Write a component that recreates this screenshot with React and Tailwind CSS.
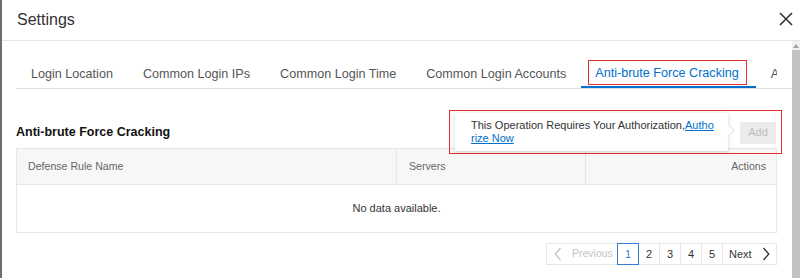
import React from 'react';

const tabs = ['Login Location', 'Common Login IPs', 'Common Login Time', 'Common Login Accounts', 'Anti-brute Force Cracking', 'Account Security'];

const Chevron = ({ dir }) => (
  <svg width="8" height="14" viewBox="0 0 8 14" fill="none" stroke="currentColor" strokeWidth="1.3">
    {dir === 'left' ? <path d="M6.5 1 L1.2 7 L6.5 13" /> : <path d="M1.5 1 L6.8 7 L1.5 13" />}
  </svg>
);

const App = () => {
  const active = 4;

  return (
    <div className="relative flex w-[800px] h-[278px] overflow-hidden bg-white text-[#333]" style={{ fontFamily: '"Liberation Sans", Arial, sans-serif' }}>
      {/* backdrop edge */}
      <div className="w-[2px] shrink-0 bg-[#6e6e6e]" />

      <div className="flex flex-1 flex-col min-w-0">
        {/* header */}
        <div className="flex h-[41px] shrink-0 items-center justify-between border-b border-[#e6e6e6] pl-[15px] pr-[7px]">
          <span className="text-[16px] text-[#333]">Settings</span>
          <svg width="14" height="14" viewBox="0 0 14 14" stroke="#333" strokeWidth="1.6" className="mt-[-2px]">
            <path d="M1 1 L13 13 M13 1 L1 13" />
          </svg>
        </div>

        <div className="flex flex-1 min-h-0">
          <div className="flex-1 min-w-0 pl-[14px]">
            {/* tabs */}
            <div className="mt-[19px] border-b border-[#e0e0e0]">
              <div className="flex w-[761px] overflow-hidden">
                {tabs.map((t, i) => (
                  <div
                    key={t}
                    className={
                      i === active
                        ? 'shrink-0 whitespace-nowrap border-b-2 border-[#0070cc] pl-[7px] pr-[9px] pb-[1px] text-[12.6px] text-[#0070cc]'
                        : 'shrink-0 whitespace-nowrap border-b-2 border-transparent px-[15px] pt-[7px] pb-[4px] text-[12.6px] leading-[15px] text-[#555]'
                    }
                  >
                    {i === active ? (
                      <span className="block border border-[#e52d2d] pl-[6px] pr-[7px] pt-[5px] pb-[3px] leading-[15px]">{t}</span>
                    ) : (
                      t
                    )}
                  </div>
                ))}
              </div>
            </div>

            {/* heading row */}
            <div className="mt-[28px] flex h-[31px] w-[761px] items-center justify-between pr-[1px]">
              <span className="text-[12.5px] font-bold text-[#111]">Anti-brute Force Cracking</span>
              <button className="h-[22px] w-[36px] bg-[#ebebeb] text-[11px] text-[#bdbdbd]">Add</button>
            </div>

            {/* table */}
            <div className="w-[761px] border border-[#e6e6e6]">
              <div className="flex h-[36px] items-center border-b border-[#e6e6e6] bg-[#f7f7f7] text-[10.6px] text-[#666]">
                <div className="flex h-full w-[380px] items-center border-r border-[#e6e6e6] pl-[11px]">Defense Rule Name</div>
                <div className="flex h-full w-[189px] items-center border-r border-[#e6e6e6] pl-[12px]">Servers</div>
                <div className="flex h-full flex-1 items-center justify-end pr-[10px]">Actions</div>
              </div>
              <div className="flex h-[47px] items-center justify-center text-[11px] text-[#333]">No data available.</div>
            </div>

            {/* pagination */}
            <div className="mt-[10px] flex w-[761px] justify-end">
              <div className="flex h-[22px] border border-[#e6e6e6] text-[11px]">
                <div className="flex w-[70px] items-center gap-[10px] pl-[7px] text-[#c4c4c4]">
                  <Chevron dir="left" />
                  <span className="text-[10.5px]">Previous</span>
                </div>
                <div className="-my-px flex w-[22px] items-center justify-center border border-[#2f7fd6] text-[#2f7fd6]">1</div>
                {['2', '3', '4', '5'].map((n) => (
                  <div key={n} className="flex w-[21px] items-center justify-center border-r border-[#e6e6e6] text-[#333]">{n}</div>
                ))}
                <div className="flex w-[53px] items-center gap-[10px] pl-[6px] text-[#333]">
                  <span>Next</span>
                  <Chevron dir="right" />
                </div>
              </div>
            </div>
          </div>

          {/* scrollbar */}
          <div className="flex w-[8px] shrink-0 flex-col bg-[#f1f1f1]">
            <div className="flex h-[9px] items-center justify-center">
              <div className="h-0 w-0 border-x-[3px] border-b-[4px] border-x-transparent border-b-[#a3a3a3]" />
            </div>
            <div className="flex-1 bg-[#c2c2c2]" />
          </div>
        </div>
      </div>

      {/* authorization popover */}
      <div className="absolute left-[449px] top-[110px] h-[44px] w-[333px] border border-[#e52d2d]" />
      <div className="absolute left-[455px] top-[113px] w-[273px] bg-white px-[16px] py-[6px] text-[11px] leading-[13px] text-[#333] shadow-[0_1px_4px_rgba(0,0,0,0.18)]">
        <div className="whitespace-nowrap">
          This Operation Requires Your Authorization,<a className="text-[#0070cc] underline">Autho</a>
        </div>
        <div>
          <a className="text-[#0070cc] underline">rize Now</a>
        </div>
        <div className="absolute right-[-5px] top-[13px] h-[9px] w-[9px] rotate-45 border-r border-t border-[#e2e2e2] bg-white" />
      </div>
    </div>
  );
};

export default App;
